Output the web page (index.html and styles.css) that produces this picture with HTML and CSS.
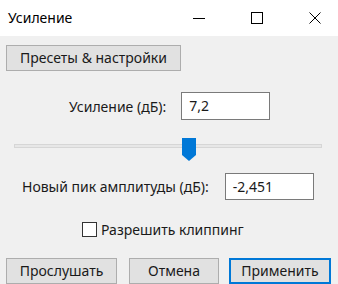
FILE: index.html
```html
<!DOCTYPE html>
<html>
<head>
<meta charset="utf-8">
<link rel="stylesheet" href="styles.css">
</head>
<body>
<div class="window">
  <div class="titlebar">
    <span class="title">Усиление</span>
    <div class="controls">
      <span class="ctl"><svg width="12" height="12" viewBox="0 0 12 12"><line x1="0" y1="6.5" x2="12" y2="6.5" stroke="#000" stroke-width="1"/></svg></span>
      <span class="ctl"><svg width="12" height="12" viewBox="0 0 12 12"><rect x="0.5" y="0.5" width="11" height="11" fill="none" stroke="#000" stroke-width="1"/></svg></span>
      <span class="ctl"><svg width="12" height="12" viewBox="0 0 12 12"><path d="M0.5 0.5 L11.5 11.5 M11.5 0.5 L0.5 11.5" stroke="#000" stroke-width="1"/></svg></span>
    </div>
  </div>
  <div class="content">
    <div class="btn presets">Пресеты &amp; настройки</div>
    <div class="row row-gain">
      <span class="label">Усиление (дБ):</span>
      <span class="input">7,2</span>
    </div>
    <div class="slider">
      <div class="track"></div>
      <svg class="thumb" width="14" height="23" viewBox="0 0 14 23"><path d="M0 0 H14 V17 L7 23 L0 17 Z" fill="#0078d7"/></svg>
    </div>
    <div class="row row-peak">
      <span class="label">Новый пик амплитуды (дБ):</span>
      <span class="input">-2,451</span>
    </div>
    <div class="check-row">
      <span class="checkbox"></span>
      <span class="label">Разрешить клиппинг</span>
    </div>
    <div class="buttons">
      <div class="btn b1">Прослушать</div>
      <div class="btn b2">Отмена</div>
      <div class="btn b3 default">Применить</div>
    </div>
  </div>
</div>
</body>
</html>
```
FILE: styles.css
```css
* { box-sizing: border-box; }
html, body { margin: 0; padding: 0; }
body {
  width: 338px;
  height: 284px;
  background: #f0f0f0;
  font-family: "Noto Sans", "Open Sans", sans-serif;
  font-size: 14px;
  color: #1a1a1a;
  overflow: hidden;
}
.titlebar {
  height: 36px;
  background: #fff;
  display: flex;
  align-items: center;
  justify-content: space-between;
}
.title {
  padding-left: 8px;
  font-size: 14px;
  padding-bottom: 2px;
  color: #000;
}
.controls {
  display: flex;
  padding-right: 17px;
}
.ctl {
  width: 58px;
  display: flex;
  justify-content: flex-end;
  height: 12px;
}
.ctl svg { display: block; }
.content {
  display: flex;
  flex-direction: column;
  padding: 9px 6px 0 6px;
}
.btn {
  height: 26px;
  border: 1px solid #adadad;
  background: #e1e1e1;
  display: flex;
  align-items: center;
  justify-content: center;
  padding-bottom: 1px;
}
.presets {
  width: 175px;
}
.row {
  display: flex;
  align-items: center;
}
.row-gain {
  margin-top: 21px;
  padding-left: 63px;
}
.row-gain .input { margin-left: 15px; height: 28px; }
.input {
  width: 89px;
  background: #fff;
  border: 1px solid #7a7a7a;
  display: flex;
  align-items: center;
  padding-left: 7px;
  padding-bottom: 1px;
}
.slider {
  position: relative;
  height: 23px;
  margin-top: 18px;
  margin-left: 8px;
  width: 308px;
}
.track {
  position: absolute;
  left: 0;
  right: 0;
  top: 6px;
  height: 4px;
  background: #e7e7e7;
  border: 1px solid #d6d6d6;
}
.thumb {
  position: absolute;
  left: 168px;
  top: 0;
}
.row-peak {
  margin-top: 12px;
  padding-left: 16px;
}
.row-peak .input { margin-left: 16px; height: 27px; }
.check-row {
  display: flex;
  align-items: center;
  margin-top: 20px;
  padding-left: 76px;
}
.checkbox {
  width: 15px;
  height: 15px;
  border: 1px solid #333;
  background: #fff;
  margin-right: 4px;
}
.buttons {
  display: flex;
  margin-top: 19px;
}
.b1 { width: 111px; }
.b2 { width: 90px; margin-left: 12px; }
.b3 { width: 102px; margin-left: 10px; }
.default {
  border: 2px solid #0078d7;
}
```
